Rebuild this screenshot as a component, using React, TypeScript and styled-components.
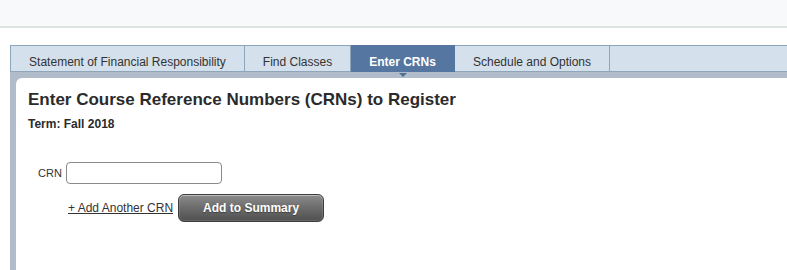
import React from "react";
import styled, { createGlobalStyle } from "styled-components";

const Global = createGlobalStyle`
  html, body { margin: 0; padding: 0; background: #ffffff; }
  body { font-family: "Liberation Sans", Arial, sans-serif; color: #333; }
`;

const Page = styled.div`
  width: 787px;
  height: 270px;
  overflow: hidden;
  display: flex;
  flex-direction: column;
`;

const TopBar = styled.div`
  height: 26px;
  flex: none;
  background: #f7f9fa;
  border-bottom: 2px solid #dde5e3;
`;

const Main = styled.div`
  flex: 1;
  display: flex;
  flex-direction: column;
  padding: 17px 0 0 10px;
  min-height: 0;
`;

const TabBar = styled.div`
  flex: none;
  display: flex;
  height: 25px;
  background: #d4e0eb;
  border-top: 1px solid #8fa6ba;
  border-bottom: 1px solid #8fa6ba;
  border-left: 1px solid #8fa6ba;
`;

const Tab = styled.div<{ $w: number; $active?: boolean }>`
  position: relative;
  box-sizing: border-box;
  width: ${(p) => p.$w}px;
  flex: none;
  padding-top: 9px;
  line-height: 14px;
  font-size: 12px;
  text-align: center;
  white-space: nowrap;
  border-right: 1px solid ${(p) => (p.$active ? "#5576a0" : "#8fa6ba")};
  background: ${(p) => (p.$active ? "#5576a0" : "transparent")};
  color: ${(p) => (p.$active ? "#ffffff" : "#333333")};
  font-weight: ${(p) => (p.$active ? "bold" : "normal")};
  ${(p) => (p.$active ? "margin-top: -1px; height: 27px; padding-top: 10px;" : "")}
`;

const Pointer = styled.span`
  position: absolute;
  left: 50%;
  bottom: -5px;
  margin-left: -4px;
  width: 0;
  height: 0;
  border-left: 4px solid transparent;
  border-right: 4px solid transparent;
  border-top: 4px solid #4e6e94;
`;

const Frame = styled.div`
  flex: 1;
  display: flex;
  background: #b0bcc9;
  padding: 6px 0 0 6px;
  min-height: 0;
`;

const Panel = styled.div`
  flex: 1;
  background: #ffffff;
  border-top-left-radius: 6px;
  padding: 11px 0 0 12px;
`;

const Heading = styled.h1`
  margin: 0;
  font-size: 17px;
  line-height: 22px;
  font-weight: bold;
  color: #2b2b2b;
`;

const Term = styled.div`
  margin-top: 6px;
  font-size: 12px;
  line-height: 15px;
  font-weight: bold;
  color: #2b2b2b;
`;

const Form = styled.div`
  margin-top: 30px;
  padding-left: 10px;
  display: flex;
  flex-direction: column;
  gap: 10px;
`;

const FieldRow = styled.div`
  display: flex;
  align-items: center;
  gap: 4px;
`;

const Label = styled.label`
  font-size: 11px;
  color: #333;
`;

const Input = styled.input`
  box-sizing: border-box;
  width: 156px;
  height: 22px;
  margin: 0;
  border: 1px solid #8a8a8a;
  border-radius: 4px;
  background: #fff;
  padding: 0 4px;
`;

const ActionRow = styled.div`
  display: flex;
  align-items: center;
  gap: 5px;
  padding-left: 30px;
`;

const Link = styled.a`
  font-size: 12px;
  color: #333;
  text-decoration: underline;
  cursor: pointer;
`;

const Button = styled.button`
  box-sizing: border-box;
  width: 146px;
  height: 28px;
  margin: 0;
  border: 1px solid #3d3d3d;
  border-radius: 6px;
  background: linear-gradient(#8c8c8c, #6b6b6b 50%, #505050);
  box-shadow: inset 0 1px 0 rgba(255, 255, 255, 0.35), inset 0 0 0 1px rgba(255, 255, 255, 0.12);
  color: #ffffff;
  font-family: "Liberation Sans", Arial, sans-serif;
  font-size: 12px;
  font-weight: bold;
  text-shadow: 0 1px 1px rgba(0, 0, 0, 0.35);
  cursor: pointer;
`;

const tabs = [
  { label: "Statement of Financial Responsibility", w: 234 },
  { label: "Find Classes", w: 106 },
  { label: "Enter CRNs", w: 104, active: true },
  { label: "Schedule and Options", w: 155 },
];

export default function App() {
  return (
    <>
      <Global />
      <Page>
        <TopBar />
        <Main>
          <TabBar>
            {tabs.map((t) => (
              <Tab key={t.label} $w={t.w} $active={t.active}>
                {t.label}
                {t.active && <Pointer />}
              </Tab>
            ))}
          </TabBar>
          <Frame>
            <Panel>
              <Heading>Enter Course Reference Numbers (CRNs) to Register</Heading>
              <Term>Term: Fall 2018</Term>
              <Form>
                <FieldRow>
                  <Label htmlFor="crn">CRN</Label>
                  <Input id="crn" type="text" />
                </FieldRow>
                <ActionRow>
                  <Link>+ Add Another CRN</Link>
                  <Button>Add to Summary</Button>
                </ActionRow>
              </Form>
            </Panel>
          </Frame>
        </Main>
      </Page>
    </>
  );
}
